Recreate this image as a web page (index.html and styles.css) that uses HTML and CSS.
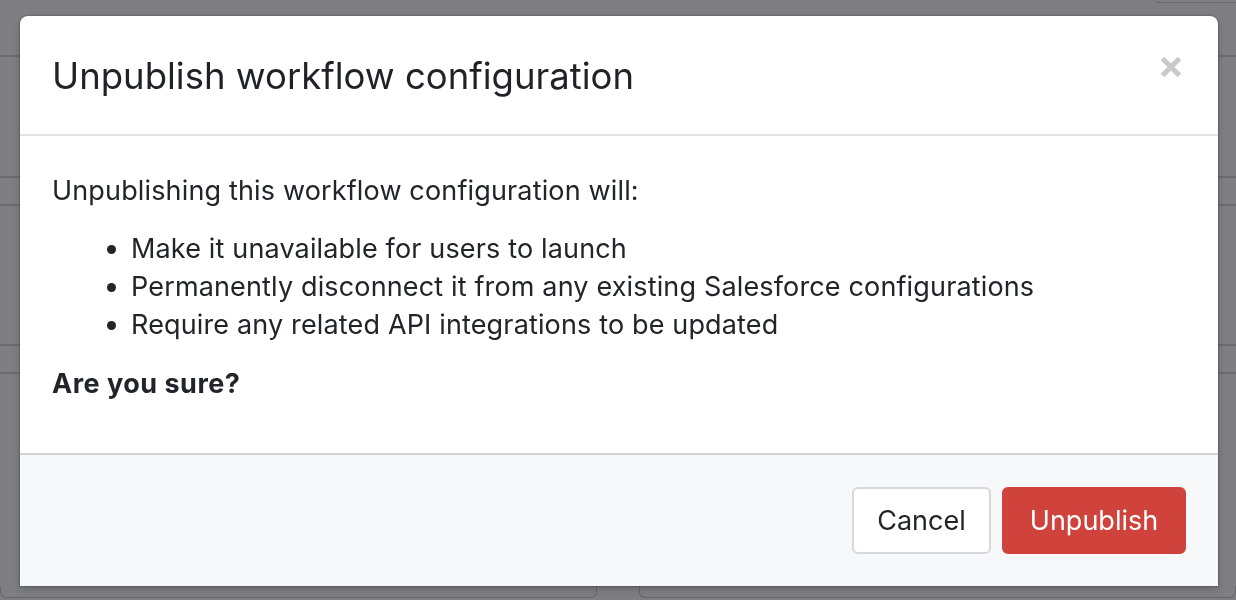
FILE: index.html
```html
<!DOCTYPE html>
<html lang="en">
<head>
<meta charset="utf-8">
<title>Unpublish workflow configuration</title>
<link rel="stylesheet" href="styles.css">
</head>
<body>
<div class="page">
  <div class="topbox"></div>
  <div class="row r1"></div>
  <div class="row r2"></div>
  <div class="row r3"></div>
  <div class="row r4"></div>
  <div class="row r5"></div>
  <div class="row r6"></div>
  <div class="bottom">
    <div class="bbox b1"></div>
    <div class="bbox b2"></div>
  </div>
</div>
<div class="backdrop"></div>
<div class="modal" role="dialog">
  <div class="modal-header">
    <h4 class="modal-title">Unpublish workflow configuration</h4>
    <button class="close" aria-label="Close">
      <svg width="22" height="22" viewBox="0 0 22 22"><path d="M2.5 2.5 L19.5 19.5 M19.5 2.5 L2.5 19.5" stroke="#c9c9c9" stroke-width="5" fill="none"/></svg>
    </button>
  </div>
  <div class="modal-body">
    <p>Unpublishing this workflow configuration will:</p>
    <ul>
      <li>Make it unavailable for users to launch</li>
      <li>Permanently disconnect it from any existing Salesforce configurations</li>
      <li>Require any related API integrations to be updated</li>
    </ul>
    <p class="strong">Are you sure?</p>
  </div>
  <div class="modal-footer">
    <button class="btn btn-light">Cancel</button>
    <button class="btn btn-danger">Unpublish</button>
  </div>
</div>
</body>
</html>
```

FILE: styles.css
```css
html, body {
  margin: 0;
  padding: 0;
  height: 100%;
  overflow: hidden;
}
body {
  background: #f3f4f8;
  font-family: Inter, "Noto Sans", sans-serif;
  color: #212529;
}
.page {
  position: relative;
  height: 600px;
  display: flex;
  flex-direction: column;
}
.topbox {
  position: absolute;
  left: 1153px;
  top: -10px;
  width: 120px;
  height: 13px;
  border: 1px solid #c9cacf;
  border-radius: 6px;
  box-sizing: border-box;
}
.row {
  border-bottom: 2px solid #cdced5;
  box-sizing: border-box;
}
.r1 { height: 57px; }
.r2 { height: 121px; }
.r3 { height: 28px; }
.r4 { height: 140px; }
.r5 { height: 28px; }
.r6 { height: 212px; border-bottom: 0; }
.bottom {
  display: flex;
  height: 14px;
  gap: 42px;
}
.bbox {
  height: 12px;
  border: 1px solid #c4c5cc;
  border-top: 0;
  border-radius: 0 0 6px 6px;
  box-sizing: border-box;
}
.b1 { width: 597px; }
.b2 { flex: 1; }
.backdrop {
  position: fixed;
  inset: 0;
  background: rgba(0, 0, 5, 0.48);
}
.modal {
  position: fixed;
  left: 20px;
  top: 16px;
  width: 1198px;
  height: 570px;
  background: #fff;
  border-radius: 8px 8px 0 0;
  box-shadow: 0 0 2px 1px rgba(0,0,0,0.18), 0 4px 10px rgba(0,0,0,0.2);
  display: flex;
  flex-direction: column;
  overflow: hidden;
}
.modal-header {
  height: 120px;
  box-sizing: border-box;
  border-bottom: 2px solid #e4e4e6;
  display: flex;
  align-items: center;
  justify-content: space-between;
  padding: 0 36px 0 32px;
}
.modal-title {
  margin: 4px 0 0 0;
  font-size: 36.5px;
  font-weight: 400;
  line-height: 1.2;
  color: #1f2226;
}
.close {
  background: none;
  border: 0;
  padding: 0;
  width: 22px;
  height: 22px;
  display: flex;
  margin-top: -17px;
}
.modal-body {
  flex: 1;
  padding: 36px 32px 0 32px;
  font-size: 27px;
  letter-spacing: 0.15px;
  line-height: 38px;
}
.modal-body p {
  margin: 0 0 20px 0;
}
.modal-body ul {
  margin: 0 0 21px 0;
  padding-left: 79px;
}
.modal-body .strong {
  font-weight: 700;
  letter-spacing: 0.5px;
}
.modal-footer {
  height: 133px;
  box-sizing: border-box;
  background: #f7f8fa;
  border-top: 2px solid #d2d3d7;
  display: flex;
  align-items: center;
  justify-content: flex-end;
  gap: 11px;
  padding: 0 32px;
}
.btn {
  height: 67px;
  box-sizing: border-box;
  border-radius: 6px;
  font-family: Inter, "Noto Sans", sans-serif;
  font-size: 27px;
  padding: 0;
  cursor: pointer;
}
.btn-light {
  width: 139px;
  background: #fff;
  border: 2px solid #d7d8dc;
  color: #212529;
}
.btn-danger {
  width: 184px;
  background: #d0433d;
  border: 2px solid #d0433d;
  color: #fff;
}
```
